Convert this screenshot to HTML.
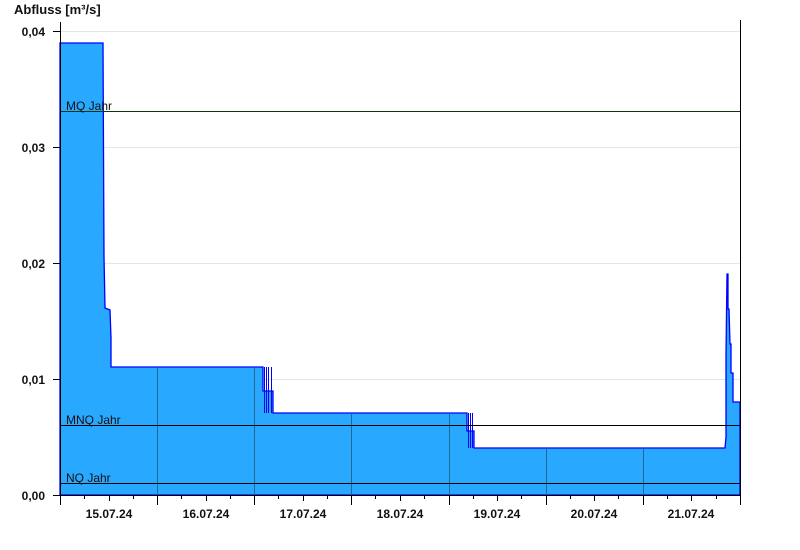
<!DOCTYPE html>
<html><head><meta charset="utf-8"><style>
body{margin:0;background:#fff;width:800px;height:550px;overflow:hidden}
svg{display:block;font-family:"Liberation Sans",sans-serif}
</style></head><body>
<svg width="800" height="550" xmlns="http://www.w3.org/2000/svg">
<text x="14" y="14" font-size="13" font-weight="bold" fill="#111">Abfluss [m³/s]</text>
<g stroke="#e6e6e6" stroke-width="1">
<line x1="60" y1="31.5" x2="740" y2="31.5"/><line x1="60" y1="147.5" x2="740" y2="147.5"/>
<line x1="60" y1="263.5" x2="740" y2="263.5"/><line x1="60" y1="379.5" x2="740" y2="379.5"/>
</g>
<path d="M60,495 L60,43 L103,43 L104,256 L105,308 L110,310 L111,338 L111,367 L263,367 L263,391 L273,391 L273,413 L467,413 L467,431 L474,431 L474,448 L725,448 L726,437 L726,355 L727,274 L728,274 L728,309 L729,309 L730,344 L731,344 L731,373 L733,373 L733,402 L740,402 L740,495 Z" fill="#29a8ff" stroke="#0000ff" stroke-width="1.3"/>
<g stroke="#0000ff" stroke-width="1">
<line x1="264.5" y1="367" x2="264.5" y2="413"/><line x1="266.5" y1="367" x2="266.5" y2="413"/>
<line x1="268.5" y1="367" x2="268.5" y2="413"/><line x1="271.5" y1="367" x2="271.5" y2="413"/>
<line x1="468.5" y1="413" x2="468.5" y2="448"/><line x1="470.5" y1="413" x2="470.5" y2="448"/>
<line x1="472.5" y1="413" x2="472.5" y2="448"/>
</g>
<g stroke="#1e6a96" stroke-width="1">
<line x1="157.5" y1="368" x2="157.5" y2="495"/><line x1="254.5" y1="368" x2="254.5" y2="495"/>
<line x1="351.5" y1="414" x2="351.5" y2="495"/><line x1="449.5" y1="414" x2="449.5" y2="495"/>
<line x1="546.5" y1="449" x2="546.5" y2="495"/><line x1="643.5" y1="449" x2="643.5" y2="495"/>
</g>
<g stroke="#000" stroke-width="1">
<line x1="60" y1="111.5" x2="740" y2="111.5" stroke="#0a3a0a"/>
<line x1="60" y1="425.5" x2="740" y2="425.5"/>
<line x1="60" y1="483.5" x2="740" y2="483.5"/>
<line x1="60.5" y1="22" x2="60.5" y2="495"/>
<line x1="740.5" y1="20" x2="740.5" y2="495"/>
<line x1="53" y1="495.5" x2="741" y2="495.5"/>
<line x1="53" y1="31.5" x2="60" y2="31.5"/><line x1="53" y1="147.5" x2="60" y2="147.5"/>
<line x1="53" y1="263.5" x2="60" y2="263.5"/><line x1="53" y1="379.5" x2="60" y2="379.5"/>
</g>
<g stroke="#000" stroke-width="1">
<path d="M60.5,495V505M157.5,495V505M254.5,495V505M351.5,495V505M449.5,495V505M546.5,495V505M643.5,495V505M740.5,495V505
M109.5,495V501M206.5,495V501M303.5,495V501M400.5,495V501M497.5,495V501M594.5,495V501M691.5,495V501
M84.5,495V499M133.5,495V499M181.5,495V499M230.5,495V499M278.5,495V499M327.5,495V499M375.5,495V499M424.5,495V499M473.5,495V499M521.5,495V499M570.5,495V499M618.5,495V499M667.5,495V499M716.5,495V499"/>
</g>
<g font-size="12" fill="#111">
<text x="66" y="110">MQ Jahr</text>
<text x="66" y="424">MNQ Jahr</text>
<text x="66" y="482">NQ Jahr</text>
</g>
<g font-size="12" font-weight="bold" fill="#111" text-anchor="end">
<text x="45" y="36">0,04</text><text x="45" y="152">0,03</text>
<text x="45" y="268">0,02</text><text x="45" y="384">0,01</text><text x="45" y="500">0,00</text>
</g>
<g font-size="12" font-weight="bold" fill="#111" text-anchor="middle">
<text x="109" y="518">15.07.24</text><text x="206" y="518">16.07.24</text>
<text x="303" y="518">17.07.24</text><text x="400" y="518">18.07.24</text>
<text x="497" y="518">19.07.24</text><text x="594" y="518">20.07.24</text>
<text x="691" y="518">21.07.24</text>
</g>
</svg>
</body></html>
